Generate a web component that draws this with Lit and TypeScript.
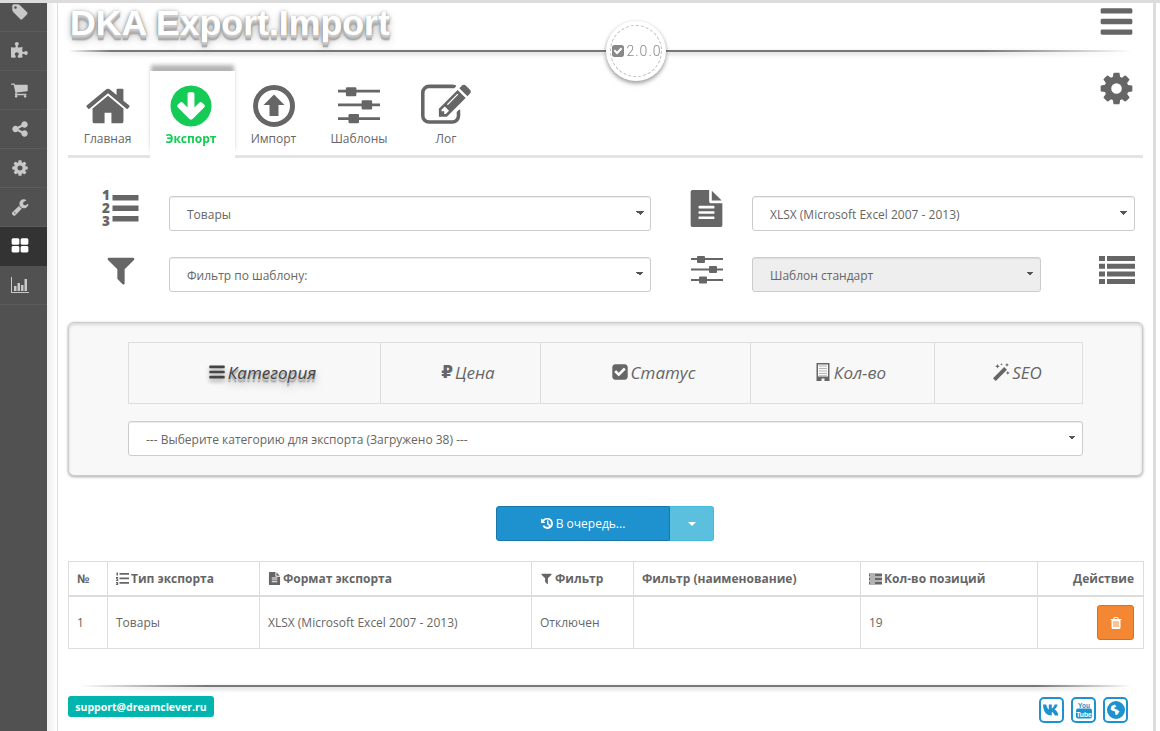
import { LitElement, css, html } from 'lit'
import { customElement } from 'lit/decorators.js'

// font-awesome style glyphs, all on a 1792 grid
const FA = {
  bars: 'M1664 1344v128q0 26-19 45t-45 19h-1408q-26 0-45-19t-19-45v-128q0-26 19-45t45-19h1408q26 0 45 19t19 45zm0-512v128q0 26-19 45t-45 19h-1408q-26 0-45-19t-19-45v-128q0-26 19-45t45-19h1408q26 0 45 19t19 45zm0-512v128q0 26-19 45t-45 19h-1408q-26 0-45-19t-19-45v-128q0-26 19-45t45-19h1408q26 0 45 19t19 45z',
  cog: 'M1152 896q0-106-75-181t-181-75-181 75-75 181 75 181 181 75 181-75 75-181zm512-109v222q0 12-8 23t-20 13l-185 28q-19 54-39 91 35 50 107 138 10 12 10 25t-9 23q-27 37-99 108t-94 71q-12 0-26-9l-138-108q-44 23-91 38-16 136-29 186-7 28-36 28h-222q-14 0-24.5-8.5t-11.5-21.5l-28-184q-49-16-90-37l-141 107q-10 9-25 9-14 0-25-11-126-114-165-168-7-10-7-23 0-12 8-23 15-21 51-66.5t54-70.5q-27-50-41-99l-183-27q-13-2-21-12.5t-8-23.5v-222q0-12 8-23t19-13l186-28q14-46 39-92-40-57-107-138-10-12-10-24 0-10 9-23 26-36 98.5-107.5t94.5-71.5q13 0 26 10l138 107q44-23 91-38 16-136 29-186 7-28 36-28h222q14 0 24.5 8.5t11.5 21.5l28 184q49 16 90 37l142-107q9-9 24-9 13 0 25 10 129 119 165 170 7 8 7 22 0 12-8 23-15 21-51 66.5t-54 70.5q26 50 41 98l183 28q13 2 21 12.5t8 23.5z',
  home: 'M1472 992v480q0 26-19 45t-45 19h-384v-384h-256v384h-384q-26 0-45-19t-19-45v-480q0-1 .5-3t.5-3l575-474 575 474q1 2 1 6zm223-69l-62 74q-8 9-21 11h-3q-13 0-21-7l-692-577-692 577q-12 8-24 7-13-2-21-11l-62-74q-8-10-7-23.5t11-21.5l719-599q32-26 76-26t76 26l244 204v-195q0-14 9-23t23-9h192q14 0 23 9t9 23v408l219 182q10 8 11 21.5t-7 23.5z',
  down: 'M1412 897q0-27-18-45l-91-91q-18-18-45-18t-45 18l-189 189v-502q0-26-19-45t-45-19h-128q-26 0-45 19t-19 45v502l-189-189q-19-19-45-19t-45 19l-91 91q-18 18-18 45t18 45l362 362 91 91q18 18 45 18t45-18l91-91 362-362q18-18 18-45zm252-1q0 209-103 385.5t-279.5 279.5-385.5 103-385.5-103-279.5-279.5-103-385.5 103-385.5 279.5-279.5 385.5-103 385.5 103 279.5 279.5 103 385.5z',
  edit: 'M888 1184l116-116-152-152-116 116v56h96v96h56zm440-720q-16-16-33 1l-350 350q-17 17-1 33t33-1l350-350q17-17 1-33zm80 594v190q0 119-84.5 203.5t-203.5 84.5h-832q-119 0-203.5-84.5t-84.5-203.5v-832q0-119 84.5-203.5t203.5-84.5h832q63 0 117 25 15 7 18 23 3 17-9 29l-49 49q-14 14-32 8-23-6-45-6h-832q-66 0-113 47t-47 113v832q0 66 47 113t113 47h832q66 0 113-47t47-113v-126q0-13 9-22l64-64q15-15 35-9t20 29zm-96-738l288 288-672 672h-288v-288zm444 132l-92 92-288-288 92-92q28-28 68-28t68 28l152 152q28 28 28 68t-28 68z',
  file: 'M1596 476q14 14 28 36h-472v-472q22 14 36 28zm-476 164h544v1056q0 40-28 68t-68 28h-1344q-40 0-68-28t-28-68v-1600q0-40 28-68t68-28h800v544q0 40 28 68t68 28zm160 736v-64q0-14-9-23t-23-9h-704q-14 0-23 9t-9 23v64q0 14 9 23t23 9h704q14 0 23-9t9-23zm0-256v-64q0-14-9-23t-23-9h-704q-14 0-23 9t-9 23v64q0 14 9 23t23 9h704q14 0 23-9t9-23zm0-256v-64q0-14-9-23t-23-9h-704q-14 0-23 9t-9 23v64q0 14 9 23t23 9h704q14 0 23-9t9-23z',
  filter: 'M1595 295q17 41-14 70l-493 493v742q0 42-39 59-13 5-25 5-27 0-45-19l-256-256q-19-19-19-45v-486l-493-493q-31-29-14-70 17-39 59-39h1280q42 0 59 39z',
  check: 'M813 1299l614-614q19-19 19-45t-19-45l-102-102q-19-19-45-19t-45 19l-467 467-211-211q-19-19-45-19t-45 19l-102 102q-19 19-19 45t19 45l358 358q19 19 45 19t45-19zm851-883v960q0 119-84.5 203.5t-203.5 84.5h-960q-119 0-203.5-84.5t-84.5-203.5v-960q0-119 84.5-203.5t203.5-84.5h960q119 0 203.5 84.5t84.5 203.5z',
  trash: 'M704 1376v-704q0-14-9-23t-23-9h-64q-14 0-23 9t-9 23v704q0 14 9 23t23 9h64q14 0 23-9t9-23zm256 0v-704q0-14-9-23t-23-9h-64q-14 0-23 9t-9 23v704q0 14 9 23t23 9h64q14 0 23-9t9-23zm256 0v-704q0-14-9-23t-23-9h-64q-14 0-23 9t-9 23v704q0 14 9 23t23 9h64q14 0 23-9t9-23zm-544-992h448l-48-117q-7-9-17-11h-317q-10 2-17 11zm928 32v64q0 14-9 23t-23 9h-96v948q0 83-47 143.5t-113 60.5h-832q-66 0-113-58.5t-47-141.5v-952h-96q-14 0-23-9t-9-23v-64q0-14 9-23t23-9h309l70-167q15-37 54-63t79-26h320q40 0 79 26t54 63l70 167h309q14 0 23 9t9 23z',
  tag: 'M576 448q0-53-37.5-90.5t-90.5-37.5-90.5 37.5-37.5 90.5 37.5 90.5 90.5 37.5 90.5-37.5 37.5-90.5zm1067 576q0 53-37 90l-491 492q-39 37-91 37-53 0-90-37l-715-716q-38-37-64.5-101t-26.5-117v-416q0-52 38-90t90-38h416q53 0 117 26.5t102 64.5l715 714q37 39 37 91z',
  puzzle: 'M1664 1098q0 81-44.5 135t-123.5 54q-41 0-77.5-17.5t-59-38-56.5-38-71-17.5q-110 0-110 124 0 39 16 115t15 115v5q-22 0-33 1-34 3-97.5 11.5t-115.5 13.5-98 5q-61 0-103-26.5t-42-83.5q0-37 17.5-71t38-56.5 38-59 17.5-77.5q0-79-54-123.5t-135-44.5q-84 0-143 45.5t-59 127.5q0 43 15 83t33.5 64.5 33.5 53 15 50.5q0 45-46 89-37 35-117 35-95 0-245-24-9-2-27.5-4t-27.5-4l-13-2q-1 0-3-1-2 0-2-1v-1024q2 1 17.5 3.5t34 5 21.5 3.5q150 24 245 24 80 0 117-35 46-44 46-89 0-22-15-50.5t-33.5-53-33.5-64.5-15-83q0-82 59-127.5t144-45.5q80 0 134 44.5t54 123.5q0 41-17.5 77.5t-38 59-38 56.5-17.5 71q0 57 42 83.5t103 26.5q64 0 180-15t163-17v2q-1 2-3.5 17.5t-5 34-3.5 21.5q-24 150-24 245 0 80 35 117 44 46 89 46 22 0 50.5-15t53-33.5 64.5-33.5 83-15q82 0 127.5 59t45.5 143z',
  cart: 'M640 1536q0 52-38 90t-90 38-90-38-38-90 38-90 90-38 90 38 38 90zm896 0q0 52-38 90t-90 38-90-38-38-90 38-90 90-38 90 38 38 90zm128-1088v512q0 24-16.5 42.5t-40.5 21.5l-1044 122q13 60 13 70 0 16-24 64h920q26 0 45 19t19 45-19 45-45 19h-1024q-26 0-45-19t-19-45q0-11 8-31.5t16-36 21.5-40 15.5-29.5l-177-823h-204q-26 0-45-19t-19-45 19-45 45-19h256q16 0 28.5 6.5t19.5 15.5 13 24.5 8 26 5.5 29.5 4.5 26h1201q26 0 45 19t19 45z',
  share: 'M1344 1024q133 0 226.5 93.5t93.5 226.5-93.5 226.5-226.5 93.5-226.5-93.5-93.5-226.5q0-12 2-34l-360-180q-92 86-218 86-133 0-226.5-93.5t-93.5-226.5 93.5-226.5 226.5-93.5q126 0 218 86l360-180q-2-22-2-34 0-133 93.5-226.5t226.5-93.5 226.5 93.5 93.5 226.5-93.5 226.5-226.5 93.5q-126 0-218-86l-360 180q2 22 2 34t-2 34l360 180q92-86 218-86z',
  wrench: 'M448 1472q0-26-19-45t-45-19-45 19-19 45 19 45 45 19 45-19 19-45zm644-420l-682 682q-37 37-90 37-52 0-91-37l-106-108q-38-36-38-90 0-53 38-91l681-681q39 98 114.5 173.5t173.5 114.5zm634-435q0 39-23 106-47 134-164.5 217.5t-258.5 83.5q-185 0-316.5-131.5t-131.5-316.5 131.5-316.5 316.5-131.5q58 0 121.5 16.5t107.5 46.5q16 11 16 28t-16 28l-293 169v224l193 107q5-3 79-48.5t135.5-81 70.5-35.5q15 0 23.5 10t8.5 25z',
  grid: 'M832 1024v384q0 52-38 90t-90 38h-512q-52 0-90-38t-38-90v-384q0-52 38-90t90-38h512q52 0 90 38t38 90zm0-768v384q0 52-38 90t-90 38h-512q-52 0-90-38t-38-90v-384q0-52 38-90t90-38h512q52 0 90 38t38 90zm896 768v384q0 52-38 90t-90 38h-512q-52 0-90-38t-38-90v-384q0-52 38-90t90-38h512q52 0 90 38t38 90zm0-768v384q0 52-38 90t-90 38h-512q-52 0-90-38t-38-90v-384q0-52 38-90t90-38h512q52 0 90 38t38 90z',
}

const fa = (d: string, cls: string) => html`<svg class="ic ${cls}" viewBox="0 0 1792 1792"><path d=${d}></path></svg>`

const upCircle = html`<svg class="ic s42" viewBox="0 0 42 42"><circle cx="21" cy="21" r="18.5" fill="none" stroke="currentColor" stroke-width="5"></circle><path d="M21 9.5L31.5 20H25.5V31H16.5V20H10.5Z"></path></svg>`

const sliders = (cls: string) => html`<svg class="ic ${cls}" viewBox="0 0 32 28"><path d="M0 2h32v2H0zM0 12.5h32v2H0zM0 23h32v2H0z"></path><rect x="6" y="0" width="8" height="7" rx="1"></rect><rect x="18" y="10" width="8" height="7" rx="1"></rect><rect x="8" y="20.500" width="8" height="7" rx="1"></rect></svg>`

const listOl = html`<svg class="ic s37 open" viewBox="0 0 37 37"><text class="num" x="0" y="10">1</text><text class="num" x="0" y="23">2</text><text class="num" x="0" y="36">3</text><path d="M10.500 5h26v5.500h-26zM10.500 15.500h26V21h-26zM10.500 26h26v5.500h-26z"></path></svg>`

const listOlSmall = html`<svg class="ic s13" viewBox="0 0 13 13"><path d="M.5 .5h1.500v3H.5zM0 5h2.200v1.200H1.400v.6h.8V9H0V7.800h1V7H0zM0 10h2.200v3H0v-1h1v-.5H0zM3.500 1H13v1.800H3.500zM3.500 5.500H13v1.800H3.500zM3.500 10H13v1.800H3.500z"></path></svg>`

const listRows = html`<svg class="ic list36" viewBox="0 0 36 28"><path d="M0 0h6v5H0zM8 0h28v5H8zM0 7.700h6v5H0zM8 7.700h28v5H8zM0 15.400h6v5H0zM8 15.400h28v5H8zM0 23h6v5H0zM8 23h28v5H8z"></path></svg>`

const building = html`<svg class="ic s18" viewBox="0 0 18 18"><path fill-rule="evenodd" d="M2.500 0h13v18h-5v-2.500h-3V18h-5zM4 1.500v12h10v-12z"></path><path class="soft" d="M5 2.500h8v1H5zM5 5h8v1H5zM5 7.500h8v1H5zM5 10h8v1H5zM5 12.300h8v.7H5z"></path></svg>`

const magic = html`<svg class="ic s18" viewBox="0 0 18 18"><path d="M1 15.200L12.200 4l2.800 2.800L3.800 18z"></path><path d="M5.500 1l.7 1.600 1.600.7-1.600.7-.7 1.600-.7-1.600L3.200 3.300l1.600-.7zM15 0l.6 1.300 1.300.6-1.300.6-.6 1.300-.6-1.300-1.300-.6 1.300-.6zM15.800 8l.6 1.300 1.300.6-1.300.6-.6 1.300-.6-1.300-1.300-.6 1.300-.6zM9.500 0l.4.900.9.4-.9.4-.4.9-.4-.9-.9-.4.9-.4z"></path></svg>`

const history = html`<svg class="ic s13" viewBox="0 0 13 13"><path d="M6.500 1A5.500 5.500 0 1 1 1.500 9l1.700-.8A3.700 3.700 0 1 0 2.900 4.700L4.500 6H0V1.500l1.600 1.300A5.500 5.500 0 0 1 6.500 1z"></path><path d="M6 3.500h1.500v3L9.500 8.200 8.600 9.300 6 7.200z"></path></svg>`

const server = html`<svg class="ic s13" viewBox="0 0 13 13"><path d="M0 1.500h13v3H0zM0 5.500h13v3H0zM0 9.500h13v3H0z"></path><path class="cut" d="M1 2.500h5v1H1zM1 6.500h5v1H1zM1 10.500h5v1H1z"></path></svg>`

const chart = html`<svg class="ic s18" viewBox="0 0 18 18"><path d="M0 1h1v15h17v1H0z"></path><path d="M3 10h2.500v5H3zM6.500 7h2.500v8H6.500zM10 9h2.500v6H10zM13.500 3H16v12h-2.500z"></path></svg>`

const vk = html`<svg class="ic soc" viewBox="0 0 18 12"><path d="M0 .5h3.200c.5 2.400 1.700 4.700 2.600 5V.5h3v3.900c1-.2 2.300-2 2.800-3.900h3c-.4 2.300-2 4.100-3.100 4.900 1.100.6 2.900 2 3.600 4.600v1.500h-3.300c-.6-2-2-3.400-3-3.600v3.600H8.400C3.300 11.500.3 8 0 .5z"></path></svg>`

const youtube = html`<svg class="ic soc" viewBox="0 0 18 18"><text class="yt" x="9" y="6.500">You</text><rect x="1" y="7.500" width="16" height="10" rx="2"></rect><text class="yt light" x="9" y="15.500">Tube</text></svg>`

const globe = html`<svg class="ic soc" viewBox="0 0 18 18"><path fill-rule="evenodd" d="M9 0a9 9 0 1 1 0 18A9 9 0 0 1 9 0zM8 3.500L4.500 5 3.500 8.500 6 10l2 .5.500 3.500 2-.5 2-3-2.500-2L8 8 7 6.500l2.500-.5z"></path></svg>`

const sideItems = [FA.tag, FA.puzzle, FA.cart, FA.share, FA.cog, FA.wrench, FA.grid, '']

const tabs = [
  { label: 'Главная', icon: fa(FA.home, 's48'), cls: 'first' },
  { label: 'Экспорт', icon: fa(FA.down, 's48'), cls: 'on' },
  { label: 'Импорт', icon: upCircle, cls: '' },
  { label: 'Шаблоны', icon: sliders('sl42'), cls: '' },
  { label: 'Лог', icon: fa(FA.edit, 's50'), cls: '' },
]

const catTabs = [
  { label: 'Категория', icon: fa(FA.bars, 's18'), cls: 'on' },
  { label: 'Цена', icon: html`<span class="rub">₽</span>`, cls: '' },
  { label: 'Статус', icon: fa(FA.check, 's18'), cls: '' },
  { label: 'Кол-во', icon: building, cls: '' },
  { label: 'SEO', icon: magic, cls: '' },
]

@customElement('app-root')
export class AppRoot extends LitElement {
  static styles = css`
    :host {
      display: block;
      width: 1160px;
      height: 731px;
      overflow: hidden;
      background: #fff;
      font-family: "Open Sans", "Liberation Sans", sans-serif;
      font-size: 12px;
      color: #666;
    }
    .ic { fill: currentColor; display: block; flex: none; }
    .open { overflow: visible; }
    .s13 { width: 13px; height: 13px; }
    .s14 { width: 14px; height: 14px; }
    .s18 { width: 18px; height: 18px; }
    .s34 { width: 34px; height: 34px; }
    .s37 { width: 37px; height: 37px; }
    .s42 { width: 42px; height: 42px; }
    .s48 { width: 48px; height: 48px; }
    .s50 { width: 50px; height: 50px; }
    .sl42 { width: 42px; height: 37px; }
    .sl32 { width: 32px; height: 28px; }
    .list36 { width: 36px; height: 28px; }
    .soc { width: 18px; height: 18px; }
    .num { font: 800 13.500px "Open Sans", sans-serif; fill: currentColor; }
    .cut { fill: #fff; }
    .soft { opacity: .45; }
    .yt { font: 700 6.500px "Liberation Sans", sans-serif; text-anchor: middle; fill: currentColor; }
    .yt.light { fill: #fff; font-size: 6.800px; }

    .shell { display: flex; height: 100%; border-top: 3px solid #dcdcdc; box-sizing: border-box; }

    .side { width: 47px; flex: none; background: #515151; overflow: hidden; color: #c8c8c8; }
    .side-list { margin-top: -10px; }
    .side-item {
      height: 39px;
      box-sizing: border-box;
      border-bottom: 1px solid #5b5b5b;
      display: flex;
      align-items: center;
      justify-content: center;
      padding-right: 7px;
    }
    .side-item.on { background: #333; color: #fff; border-bottom-color: #333; }

    .band { width: 10px; flex: none; background: linear-gradient(90deg, #eee, #fff); }
    .page {
      width: 1099px;
      flex: none;
      box-sizing: border-box;
      border-left: 1px solid #ddd;
      border-right: 3px solid #ddd;
      padding: 0 10px;
    }
    .page-wrap { width: 1075px; }

    .top { display: flex; justify-content: space-between; height: 47px; }
    .title {
      margin: 0 0 0 2px;
      font: 700 35.700px/41px "Liberation Sans", sans-serif;
      color: #fff;
      text-shadow: 0 1px 0 #ccc, 0 2px 0 #c9c9c9, 0 3px 0 #bbb, 0 4px 0 #b0b0b0, 0 5px 0 #aaa,
        0 6px 1px rgba(0,0,0,.1), 0 0 5px rgba(0,0,0,.15), 0 1px 3px rgba(0,0,0,.3),
        0 3px 5px rgba(0,0,0,.2), 0 5px 10px rgba(0,0,0,.25);
    }
    .burger { margin-right: 8px; color: #666; }

    .rule {
      position: relative;
      height: 2px;
      background: linear-gradient(90deg, transparent, #777 4%, #777 85%, transparent 99%);
      filter: drop-shadow(0 2px 2px rgba(0,0,0,.25));
    }
    .rule.foot { background: linear-gradient(90deg, transparent 1%, #777 13%, #777 90%, transparent 99%); }
    .version {
      position: absolute;
      left: 538px;
      top: -29px;
      width: 60px;
      height: 60px;
      box-sizing: border-box;
      padding: 4px;
      border-radius: 50%;
      background: #fff;
      box-shadow: 0 2px 4px rgba(0,0,0,.2);
    }
    .version-in {
      height: 100%;
      box-sizing: border-box;
      border: 1px dashed #bbb;
      border-radius: 50%;
      display: flex;
      align-items: center;
      justify-content: center;
      gap: 2px;
      font: 300 14px Roboto, sans-serif;
      letter-spacing: 1px;
      color: #888;
      white-space: nowrap;
    }

    .tabbar {
      margin-top: 19px;
      height: 87px;
      box-sizing: border-box;
      border-bottom: 3px solid #e4e4e4;
      display: flex;
    }
    .tab {
      width: 77px;
      height: 87px;
      box-sizing: border-box;
      padding-top: 10px;
      display: flex;
      flex-direction: column;
      align-items: center;
      flex: none;
    }
    .tab:nth-child(4) { width: 94px; }
    .tab:nth-child(5) { width: 80px; }
    .tab.first { width: 82px; padding-right: 3px; }
    .tab.on {
      width: 85px;
      padding-right: 3px;
      background: #fff;
      box-shadow: 0 -7px 4px -1px #b5b5b5;
      position: relative;
      color: #14cc55;
      font-weight: 700;
    }
    .tab-ic { height: 49px; display: flex; align-items: center; justify-content: center; }
    .tab-label { margin-top: 1px; line-height: 16px; }
    .gear { margin: -1px 8px 0 auto; color: #666; }

    .form {
      margin-top: 38px;
      display: grid;
      grid-template-columns: 101px 482px 101px 383px;
      grid-auto-rows: 35px;
      row-gap: 26px;
    }
    .ico { width: 37px; height: 37px; margin-top: -6px; display: flex; align-items: center; justify-content: center; color: #666; }
    .ico.l { margin-left: 34px; }
    .ico.r { margin-left: 37px; }
    .pair { display: flex; justify-content: space-between; }
    .pair .list36 { margin-top: -1px; color: #666; }

    select {
      appearance: none;
      -webkit-appearance: none;
      width: 100%;
      height: 35px;
      box-sizing: border-box;
      border: 1px solid #ccc;
      border-radius: 3px;
      background-color: #fff;
      background-image: linear-gradient(45deg, transparent 50%, #555 50%), linear-gradient(-45deg, transparent 50%, #555 50%);
      background-size: 4px 4px, 4px 4px;
      background-position: calc(100% - 10px) 14px, calc(100% - 6px) 14px;
      background-repeat: no-repeat;
      padding: 1px 17px 0;
      font: 12px "Open Sans", sans-serif;
      color: #666;
      box-shadow: inset 0 1px 1px rgba(0,0,0,.075);
      opacity: 1;
    }
    select:disabled { background-color: #eee; color: #666; opacity: 1; }
    .w289 { width: 289px; }

    .panel {
      margin-top: 30px;
      height: 154px;
      box-sizing: border-box;
      padding: 19px 59px;
      background: #f8f8f8;
      border: 1px solid #ccc;
      border-radius: 6px;
      box-shadow: inset 0 2px 3px rgba(0,0,0,.12), 0 1px 3px rgba(0,0,0,.35);
    }
    .cats {
      display: grid;
      grid-template-columns: 252px 160px 210px 184px 149px;
      height: 62px;
      box-sizing: border-box;
      border: 1px solid #ddd;
      margin-bottom: 17px;
    }
    .cat {
      display: flex;
      align-items: center;
      justify-content: center;
      gap: 2px;
      padding: 0 0 2px 15px;
      border-right: 1px solid #ddd;
      font-size: 17px;
      font-style: italic;
      color: #666;
    }
    .cat:last-child { border-right: 0; }
    .cat.on {
      color: #444;
      text-shadow: 0 1px 0 #ccc, 0 2px 0 #bbb, 0 3px 0 #aaa, 0 4px 1px rgba(0,0,0,.1),
        0 3px 5px rgba(0,0,0,.2), 0 6px 10px rgba(0,0,0,.25);
    }
    .cat.on .ic { color: #444; filter: drop-shadow(0 3px 2px rgba(0,0,0,.35)); }
    .rub { font: 700 17px "DejaVu Sans", sans-serif; }

    .actions { margin-top: 30px; display: flex; justify-content: center; padding-right: 1px; }
    .btn {
      height: 35px;
      box-sizing: border-box;
      border: 1px solid #1978ab;
      background: #1e91cf;
      color: #fff;
      display: flex;
      align-items: center;
      justify-content: center;
      gap: 2px;
      font-size: 12px;
    }
    .btn.main { width: 174px; border-radius: 3px 0 0 3px; }
    .btn.more { width: 44px; background: #5bc0de; border-color: #46b8da; border-left: 0; border-radius: 0 3px 3px 0; }
    .caret { border: 4px solid transparent; border-top-color: #fff; border-bottom: 0; }

    table {
      margin-top: 20px;
      width: 1075px;
      table-layout: fixed;
      border-collapse: collapse;
    }
    th, td { border: 1px solid #ddd; padding: 0 8px; text-align: left; font-size: 12px; }
    th { height: 33px; border-bottom-width: 2px; font-weight: 700; color: #666; }
    td { height: 51px; }
    .th-in { display: flex; align-items: center; gap: 2px; }
    th.end { text-align: right; padding-right: 9px; }
    .del {
      margin: 0 1px 0 auto;
      width: 37px;
      height: 35px;
      box-sizing: border-box;
      border: 1px solid #f06800;
      border-radius: 3px;
      background: #f38733;
      color: #fff;
      display: flex;
      align-items: center;
      justify-content: center;
    }

    .foot-wrap { margin-top: 36px; }
    .foot-row { margin-top: 9px; display: flex; justify-content: space-between; align-items: flex-start; }
    .mail {
      width: 146px;
      height: 21px;
      border-radius: 3px;
      background: #00b5ad;
      color: #fff;
      font-size: 10.500px;
      font-weight: 700;
      display: flex;
      align-items: center;
      justify-content: center;
    }
    .socials { display: flex; gap: 7px; margin: 1px 15px 0 0; }
    .soc-box {
      width: 25px;
      height: 26px;
      box-sizing: border-box;
      border: 2px solid #1e91cf;
      border-radius: 5px;
      color: #1e91cf;
      display: flex;
      align-items: center;
      justify-content: center;
    }
  `

  render() {
    return html`
      <div class="shell">
        <nav class="side">
          <div class="side-list">
            ${sideItems.map((d, i) => html`
              <div class="side-item ${i === 6 ? 'on' : ''}">
                ${d ? fa(d, 's18') : chart}
              </div>
            `)}
          </div>
        </nav>
        <div class="band"></div>
        <main class="page">
          <div class="page-wrap">
            <div class="top">
              <h1 class="title">DKA Export.Import</h1>
              <div class="burger">${fa(FA.bars, 's37')}</div>
            </div>
            <div class="rule">
              <div class="version"><div class="version-in">${fa(FA.check, 's14')}2.0.0</div></div>
            </div>

            <div class="tabbar">
              ${tabs.map(t => html`
                <div class="tab ${t.cls}">
                  <div class="tab-ic">${t.icon}</div>
                  <div class="tab-label">${t.label}</div>
                </div>
              `)}
              <div class="gear">${fa(FA.cog, 's37')}</div>
            </div>

            <div class="form">
              <div class="ico l">${listOl}</div>
              <select><option>Товары</option></select>
              <div class="ico r">${fa(FA.file, 's37')}</div>
              <select><option>XLSX (Microsoft Excel 2007 - 2013)</option></select>

              <div class="ico l">${fa(FA.filter, 's34')}</div>
              <select><option>Фильтр по шаблону:</option></select>
              <div class="ico r">${sliders('sl32')}</div>
              <div class="pair">
                <select class="w289" disabled><option>Шаблон стандарт</option></select>
                ${listRows}
              </div>
            </div>

            <section class="panel">
              <div class="cats">
                ${catTabs.map(c => html`<div class="cat ${c.cls}">${c.icon}<span>${c.label}</span></div>`)}
              </div>
              <select><option>--- Выберите категорию для экспорта (Загружено 38) ---</option></select>
            </section>

            <div class="actions">
              <div class="btn main">${history}<span>В очередь...</span></div>
              <div class="btn more"><span class="caret"></span></div>
            </div>

            <table>
              <colgroup>
                <col style="width:39px"><col style="width:152px"><col style="width:272px"><col style="width:102px"><col style="width:227px"><col style="width:177px"><col style="width:106px">
              </colgroup>
              <thead>
                <tr>
                  <th>№</th>
                  <th><div class="th-in">${listOlSmall}Тип экспорта</div></th>
                  <th><div class="th-in">${fa(FA.file, 's13')}Формат экспорта</div></th>
                  <th><div class="th-in">${fa(FA.filter, 's13')}Фильтр</div></th>
                  <th>Фильтр (наименование)</th>
                  <th><div class="th-in">${server}Кол-во позиций</div></th>
                  <th class="end">Действие</th>
                </tr>
              </thead>
              <tbody>
                <tr>
                  <td>1</td>
                  <td>Товары</td>
                  <td>XLSX (Microsoft Excel 2007 - 2013)</td>
                  <td>Отключен</td>
                  <td></td>
                  <td>19</td>
                  <td><div class="del">${fa(FA.trash, 's14')}</div></td>
                </tr>
              </tbody>
            </table>

            <div class="foot-wrap">
              <div class="rule foot"></div>
              <div class="foot-row">
                <div class="mail">support@dreamclever.ru</div>
                <div class="socials">
                  <div class="soc-box">${vk}</div>
                  <div class="soc-box">${youtube}</div>
                  <div class="soc-box">${globe}</div>
                </div>
              </div>
            </div>
          </div>
        </main>
      </div>
    `
  }
}

declare global {
  interface HTMLElementTagNameMap {
    'app-root': AppRoot
  }
}
